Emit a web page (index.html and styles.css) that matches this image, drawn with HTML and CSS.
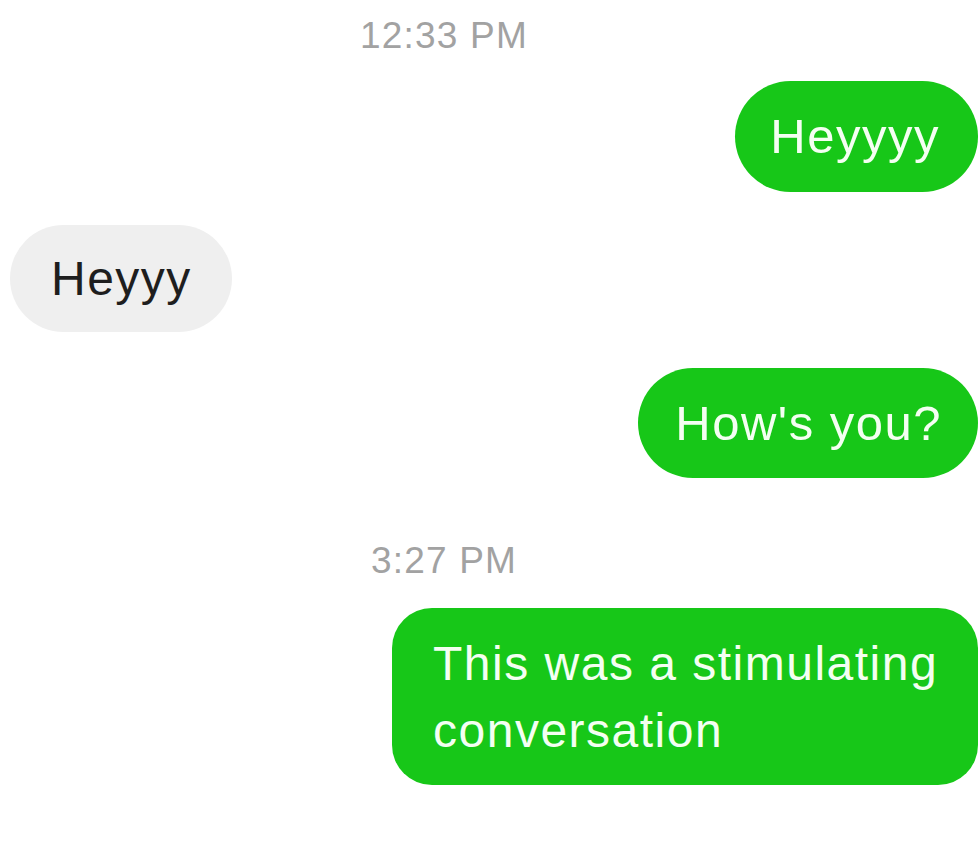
FILE: index.html
```html
<!DOCTYPE html>
<html lang="en">
<head>
<meta charset="utf-8">
<title>Messages</title>
<link rel="stylesheet" href="styles.css">
</head>
<body>
<main class="chat">
  <div class="stamp stamp-first">12:33 PM</div>
  <div class="row out r1"><div class="bubble green b-hey">Heyyyy</div></div>
  <div class="row in r2"><div class="bubble gray b-heyin">Heyyy</div></div>
  <div class="row out r3"><div class="bubble green b-hows">How's you?</div></div>
  <div class="stamp stamp-second">3:27 PM</div>
  <div class="row out r4"><div class="bubble green b-long">This was a stimulating conversation</div></div>
</main>
</body>
</html>
```

FILE: styles.css
```css
html, body {
  margin: 0;
  padding: 0;
  background: #ffffff;
}

.chat {
  width: 980px;
  height: 857px;
  display: flex;
  flex-direction: column;
  font-family: "Liberation Sans", Arial, sans-serif;
}

.stamp {
  font-size: 37px;
  letter-spacing: 1.2px;
  color: #a2a2a2;
  text-align: center;
  padding-right: 92px;
  line-height: 42px;
}

.stamp-first { margin-top: 15px; }
.stamp-second { margin-top: 62px; }

.row {
  display: flex;
}

.row.out {
  justify-content: flex-end;
  padding-right: 2px;
}

.row.in {
  justify-content: flex-start;
  padding-left: 10px;
}

.r1 { margin-top: 24px; }
.r2 { margin-top: 33px; }
.r3 { margin-top: 36px; }
.r4 { margin-top: 26px; }

.bubble {
  font-size: 48px;
  letter-spacing: 1.5px;
  line-height: 67px;
  box-sizing: border-box;
}

.green {
  background: #17c718;
  color: #f4fff2;
}

.gray {
  background: #efefef;
  color: #1e1e1e;
}

.b-hey, .b-hows {
  font-size: 49px;
}

.b-hey {
  padding: 22px 38px 22px 35px;
  border-radius: 56px;
}

.b-heyin {
  padding: 20px 40px 20px 41px;
  border-radius: 54px;
}

.b-hows {
  padding: 22px 36px 21px 37px;
  border-radius: 55px;
}

.b-long {
  width: 586px;
  padding: 22px 36px 21px 41px;
  border-radius: 40px;
}
```
